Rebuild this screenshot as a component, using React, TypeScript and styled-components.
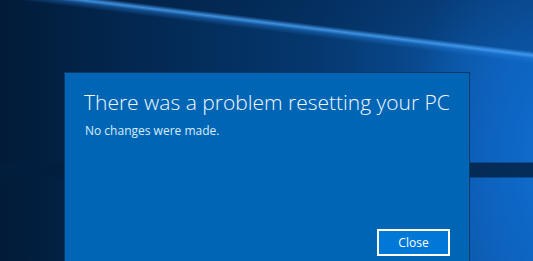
import React from "react";
import styled, { createGlobalStyle } from "styled-components";

const Global = createGlobalStyle`
  html, body { margin: 0; padding: 0; }
  body { width: 533px; height: 261px; overflow: hidden; font-family: "Open Sans", "Noto Sans", sans-serif; }
`;

const Desktop = styled.div`
  width: 533px;
  height: 261px;
  overflow: hidden;
  box-sizing: border-box;
  padding: 72px 0 0 64px;
  background:
    linear-gradient(180deg, transparent 0, transparent 162px, rgba(2, 30, 62, 0.8) 163px, rgba(2, 30, 62, 0.8) 177px, transparent 178px),
    linear-gradient(187deg, transparent 0, transparent 51px, rgba(70, 160, 245, 0.85) 55px, rgba(40, 130, 225, 0.4) 58px, transparent 63px),
    linear-gradient(187deg, rgba(0, 18, 45, 0.3) 0, rgba(0, 18, 45, 0.2) 53px, transparent 55px),
    radial-gradient(ellipse 200px 260px at 600px 160px, #1478dc 0%, #0e66c4 45%, rgba(10, 80, 160, 0) 100%),
    linear-gradient(90deg, #021b38 0%, #032a55 30%, #05386f 60%, #0a4f98 85%, #0d5fb4 100%);
`;

const Dialog = styled.section`
  width: 406px;
  height: 219px;
  box-sizing: border-box;
  background: #0065b5;
  border: 1px solid #0b3a69;
  padding: 14px 19px 34px 19px;
  display: flex;
  flex-direction: column;
  color: #ffffff;
`;

const Title = styled.h1`
  margin: 0;
  font-family: "Open Sans", "Noto Sans", sans-serif;
  font-weight: 300;
  font-size: 21px;
  line-height: 30px;
  color: #f4f8fc;
  white-space: nowrap;
`;

const Message = styled.p`
  margin: 6px 0 0 1px;
  font-family: "Open Sans", "Noto Sans", sans-serif;
  font-size: 12px;
  line-height: 16px;
  color: #d8ecfb;
`;

const Footer = styled.div`
  margin-top: auto;
  display: flex;
  justify-content: flex-end;
`;

const Button = styled.button`
  width: 73px;
  height: 27px;
  box-sizing: border-box;
  border: 2px solid #ffffff;
  background: #0078d7;
  color: #ffffff;
  font-family: "Open Sans", "Noto Sans", sans-serif;
  font-size: 12px;
  padding: 0;
  cursor: pointer;
`;

export default function App() {
  return (
    <>
      <Global />
      <Desktop>
        <Dialog>
          <Title>There was a problem resetting your PC</Title>
          <Message>No changes were made.</Message>
          <Footer>
            <Button>Close</Button>
          </Footer>
        </Dialog>
      </Desktop>
    </>
  );
}
